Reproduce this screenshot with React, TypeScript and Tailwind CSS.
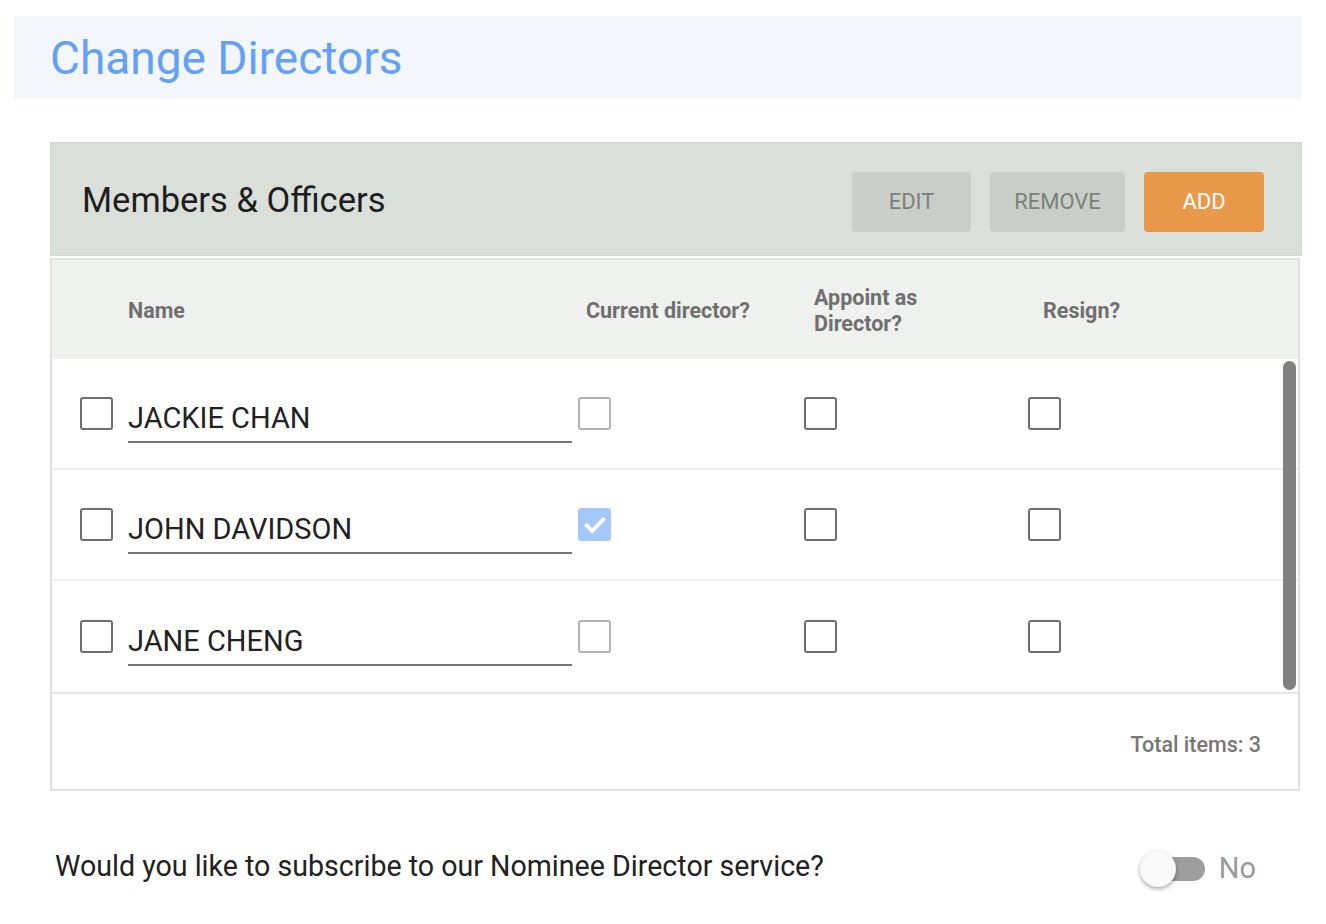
import { useState } from "react";

/* ---------------- Data ---------------- */

type Member = { name: string; current: boolean };

const members: Member[] = [
    { name: "JACKIE CHAN", current: false },
    { name: "JOHN DAVIDSON", current: true },
    { name: "JANE CHENG", current: false },
];

/* ---------------- Bits ---------------- */

function Box({ checked = false, muted = false }: { checked?: boolean; muted?: boolean }) {
    if (checked) {
        return (
            <span className="flex h-[33px] w-[33px] items-center justify-center rounded-[3px] bg-[#a4c8fb]">
                <svg viewBox="0 0 24 24" className="h-[28px] w-[28px]" fill="none" stroke="white" strokeWidth="3.4" strokeLinecap="square">
                    <path d="M5 12.5l4.5 4.5L19 7.5" />
                </svg>
            </span>
        );
    }
    return (
        <span
            className={
                muted
                    ? "block h-[33px] w-[33px] rounded-[3px] border-2 border-[#b3b3b3] bg-white"
                    : "block h-[33px] w-[33px] rounded-[3px] border-2 border-[#6e6e6e] bg-white"
            }
        />
    );
}

/* ---------------- Page ---------------- */

export default function App() {
    const [on, setOn] = useState(false);

    return (
        <div className="min-h-screen bg-white pt-4 font-['Roboto',sans-serif] text-[#222]">
            {/* Title */}
            <div className="mx-[14px] mr-[24px] flex h-[83px] items-center bg-[#f3f6fa] pl-[36px]">
                <h1 className="text-[46px] font-normal leading-none text-[#63a1f7]">Change Directors</h1>
            </div>

            <div className="ml-[50px] mr-[24px] mt-[43px]">
                {/* Card header */}
                <div className="flex h-[114px] items-center justify-between border border-[#d3d8d2] bg-[#dadfd9] pl-[31px] pr-[37px]">
                    <h2 className="mt-[3px] text-[34.5px] font-normal text-[#1e1e1e]">Members &amp; Officers</h2>
                    <div className="mt-[5px] flex gap-[19px]">
                        <button className="h-[60px] w-[119px] rounded-[4px] bg-[#c9cfc8] text-[22px] text-[#7b807b]">EDIT</button>
                        <button className="h-[60px] w-[135px] rounded-[4px] bg-[#c9cfc8] text-[22px] text-[#7b807b]">REMOVE</button>
                        <button className="h-[60px] w-[120px] rounded-[4px] bg-[#e8994a] text-[22px] text-white">ADD</button>
                    </div>
                </div>

                {/* Table */}
                <div className="mt-[2px] mr-[2px] border-2 border-[#e0e0e0]">
                    <div className="grid h-[99px] grid-cols-[534px_228px_224px_1fr] items-center bg-[#eff1ee] pt-[3px] text-[21.5px] font-bold leading-[26px] text-[#6f6f6f]">
                        <div className="pl-[76px]">Name</div>
                        <div>Current director?</div>
                        <div>Appoint as<br />Director?</div>
                        <div className="pl-[5px]">Resign?</div>
                    </div>

                    <div className="relative">
                        {members.map((m, i) => (
                            <div
                                key={m.name}
                                className={
                                    i < members.length - 1
                                        ? "grid h-[111px] grid-cols-[526px_226px_224px_1fr] items-center border-b-2 border-[#efefef]"
                                        : "grid h-[111px] grid-cols-[526px_226px_224px_1fr] items-center"
                                }
                            >
                                <div className="flex items-center pl-[28px]">
                                    <Box />
                                    <div className="ml-[15px] mt-[16px] w-[444px] border-b-2 border-[#777] pb-[6px] text-[29px] leading-[34px] text-[#222]">
                                        {m.name}
                                    </div>
                                </div>
                                <div>
                                    <Box checked={m.current} muted />
                                </div>
                                <div>
                                    <Box />
                                </div>
                                <div>
                                    <Box />
                                </div>
                            </div>
                        ))}
                        {/* scrollbar */}
                        <div className="absolute right-[2px] top-[2px] bottom-[2px] w-[13px] rounded-full bg-[#808080]" />
                    </div>

                    <div className="flex h-[97px] items-center justify-end border-t-2 border-[#e6e6e6] pt-[8px] pr-[37px] text-[21.5px] font-medium text-[#777]">
                        Total items: 3
                    </div>
                </div>
            </div>

            {/* Nominee */}
            <div className="ml-[55px] mr-[70px] mt-[52px] flex items-center justify-between">
                <p className="text-[28.6px] text-[#222]">Would you like to subscribe to our Nominee Director service?</p>
                <button onClick={() => setOn(!on)} className="mt-[4px] flex items-center gap-[14px]">
                    <span className="relative block h-[24px] w-[64px] rounded-full bg-[#9e9e9e]">
                        <span className="absolute -left-[1px] -top-[6px] block h-[36px] w-[36px] rounded-full bg-[#fafafa] shadow-[0_2px_4px_rgba(0,0,0,0.35)]" />
                    </span>
                    <span className="text-[29px] text-[#9a9a9a]">No</span>
                </button>
            </div>
        </div>
    );
}
